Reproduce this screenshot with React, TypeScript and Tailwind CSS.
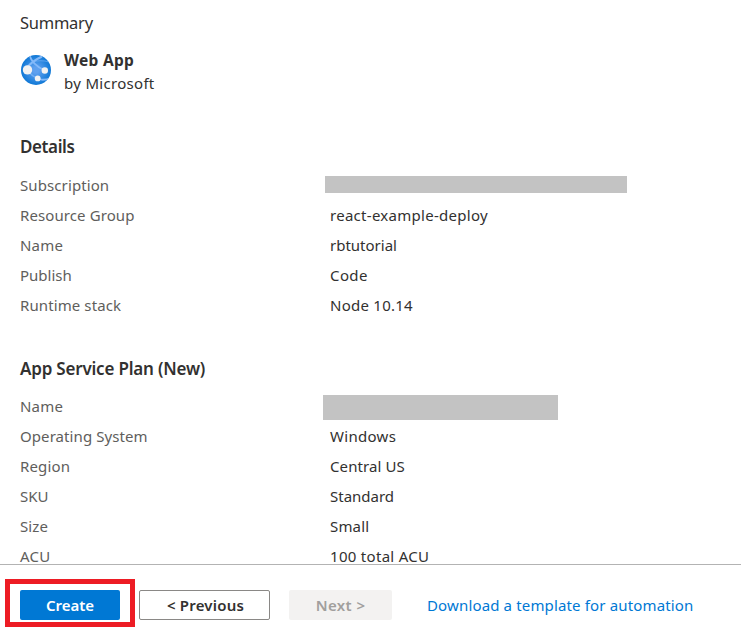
import React from "react";

type Item = { label: string; lt: string; value?: string; vt?: string; bar?: string };

const details: Item[] = [
  { label: "Subscription", lt: "tracking-[0.1px]", bar: "-ml-[5px] -mt-px w-[302px] h-[17px]" },
  { label: "Resource Group", lt: "tracking-[0.1px]", value: "react-example-deploy", vt: "tracking-[0.28px]" },
  { label: "Name", lt: "tracking-[0.2px]", value: "rbtutorial", vt: "tracking-normal" },
  { label: "Publish", lt: "tracking-normal", value: "Code", vt: "tracking-[0.4px]" },
  { label: "Runtime stack", lt: "tracking-[0.1px]", value: "Node 10.14", vt: "tracking-[0.25px]" },
];

const plan: Item[] = [
  { label: "Name", lt: "tracking-[0.2px]", bar: "-ml-[7px] mt-[2px] w-[235px] h-[25px]" },
  { label: "Operating System", lt: "tracking-[0.08px]", value: "Windows", vt: "tracking-[0.3px]" },
  { label: "Region", lt: "tracking-[0.15px]", value: "Central US", vt: "tracking-[0.1px]" },
  { label: "SKU", lt: "tracking-normal", value: "Standard", vt: "tracking-normal" },
  { label: "Size", lt: "tracking-[0.1px]", value: "Small", vt: "tracking-[0.15px]" },
  { label: "ACU", lt: "tracking-[0.3px]", value: "100 total ACU", vt: "tracking-[0.3px]" },
];

function Rows({ items }: { items: Item[] }) {
  return (
    <dl>
      {items.map((item) => (
        <div key={item.label} className="flex h-[30px] items-center whitespace-nowrap text-[15px] leading-4">
          <dt className={`w-[310px] shrink-0 text-[#605e5c] ${item.lt}`}>{item.label}</dt>
          <dd className={`text-[#323130] ${item.vt ?? ""}`}>
            {item.bar ? <div className={`bg-[#c3c3c3] ${item.bar}`} /> : item.value}
          </dd>
        </div>
      ))}
    </dl>
  );
}

function WebAppIcon() {
  return (
    <svg viewBox="0 0 30 30" className="size-[30px] shrink-0">
      <defs>
        <radialGradient id="globe" cx="15" cy="15" r="15" gradientUnits="userSpaceOnUse">
          <stop offset="0.2" stopColor="#5ea0ef" />
          <stop offset="1" stopColor="#0f78d6" />
        </radialGradient>
        <clipPath id="disc"><circle cx="15" cy="15" r="15" /></clipPath>
      </defs>
      <circle cx="15" cy="15" r="15" fill="url(#globe)" />
      <g clipPath="url(#disc)" stroke="#83b9f9" fill="none">
        <path d="M6 13C9 8.500 13.500 5 21 1.500" strokeWidth="2.200" />
        <path d="M8.500 0C10 6 15 11.500 24 15.500" strokeWidth="1.800" />
        <path d="M11.500 6.500C17 5.500 22 5 28 7" strokeWidth="1.200" strokeOpacity="0.6" />
        <path d="M7 16C10 20 13 22 17 24" strokeWidth="1.400" strokeOpacity="0.7" />
        <path d="M17 24C21 25.300 25 25 30 23" strokeWidth="1.800" />
      </g>
      <g fill="#f2f2f2">
        <circle cx="6.500" cy="14.900" r="4.700" />
        <circle cx="23.800" cy="15.500" r="3.200" />
        <circle cx="16.700" cy="23.400" r="2.900" />
      </g>
    </svg>
  );
}

export default function App() {
  return (
    <div className="flex h-[640px] w-[745px] flex-col overflow-hidden bg-white font-['Noto_Sans',sans-serif] text-[15px] text-[#323130]">
      <main className="h-[564px] shrink-0 px-5 whitespace-nowrap">
        <h1 className="mt-[11px] h-6 text-[16.5px] leading-6 tracking-[-0.25px]">Summary</h1>
        <div className="mt-[14px] flex h-[46px] items-start">
          <div className="mt-[5.500px] ml-[0.500px]"><WebAppIcon /></div>
          <div className="ml-[13.500px] leading-[23px]">
            <div className="text-[15.5px] font-bold tracking-[0.3px]">Web App</div>
            <div className="tracking-[0.3px]">by Microsoft</div>
          </div>
        </div>
        <h2 className="mt-10 h-6 text-[17px] leading-6 font-semibold tracking-[-0.4px]">Details</h2>
        <div className="mt-[11px]"><Rows items={details} /></div>
        <h2 className="mt-[37px] h-6 text-[17px] leading-6 font-semibold tracking-[-0.2px]">App Service Plan (New)</h2>
        <div className="mt-[10px]"><Rows items={plan} /></div>
      </main>
      <div className="h-px w-[741px] shrink-0 bg-[#b3b3b3]" />
      <footer className="flex h-[75px] items-start pt-[14px] font-semibold whitespace-nowrap">
        <div className="ml-[5px] flex h-12 w-[130px] items-start justify-center border-5 border-[#ed1c24] pt-[6px]">
          <button className="h-[30px] w-[100px] rounded-[2px] bg-[#0078d4] text-white">Create</button>
        </div>
        <button className="mt-[11px] ml-1 h-[30px] w-[131px] rounded-[2px] border border-[#8a8886] pl-[2px] tracking-[0.2px]">&lt; Previous</button>
        <button className="mt-[11px] ml-[19px] h-[30px] w-[103px] rounded-[2px] bg-[#f3f2f1] tracking-[0.4px] text-[#a19f9d]">Next &gt;</button>
        <a className="mt-[11px] ml-[35px] leading-[30px] font-normal tracking-[0.15px] text-[#0078d4]">Download a template for automation</a>
      </footer>
    </div>
  );
}
